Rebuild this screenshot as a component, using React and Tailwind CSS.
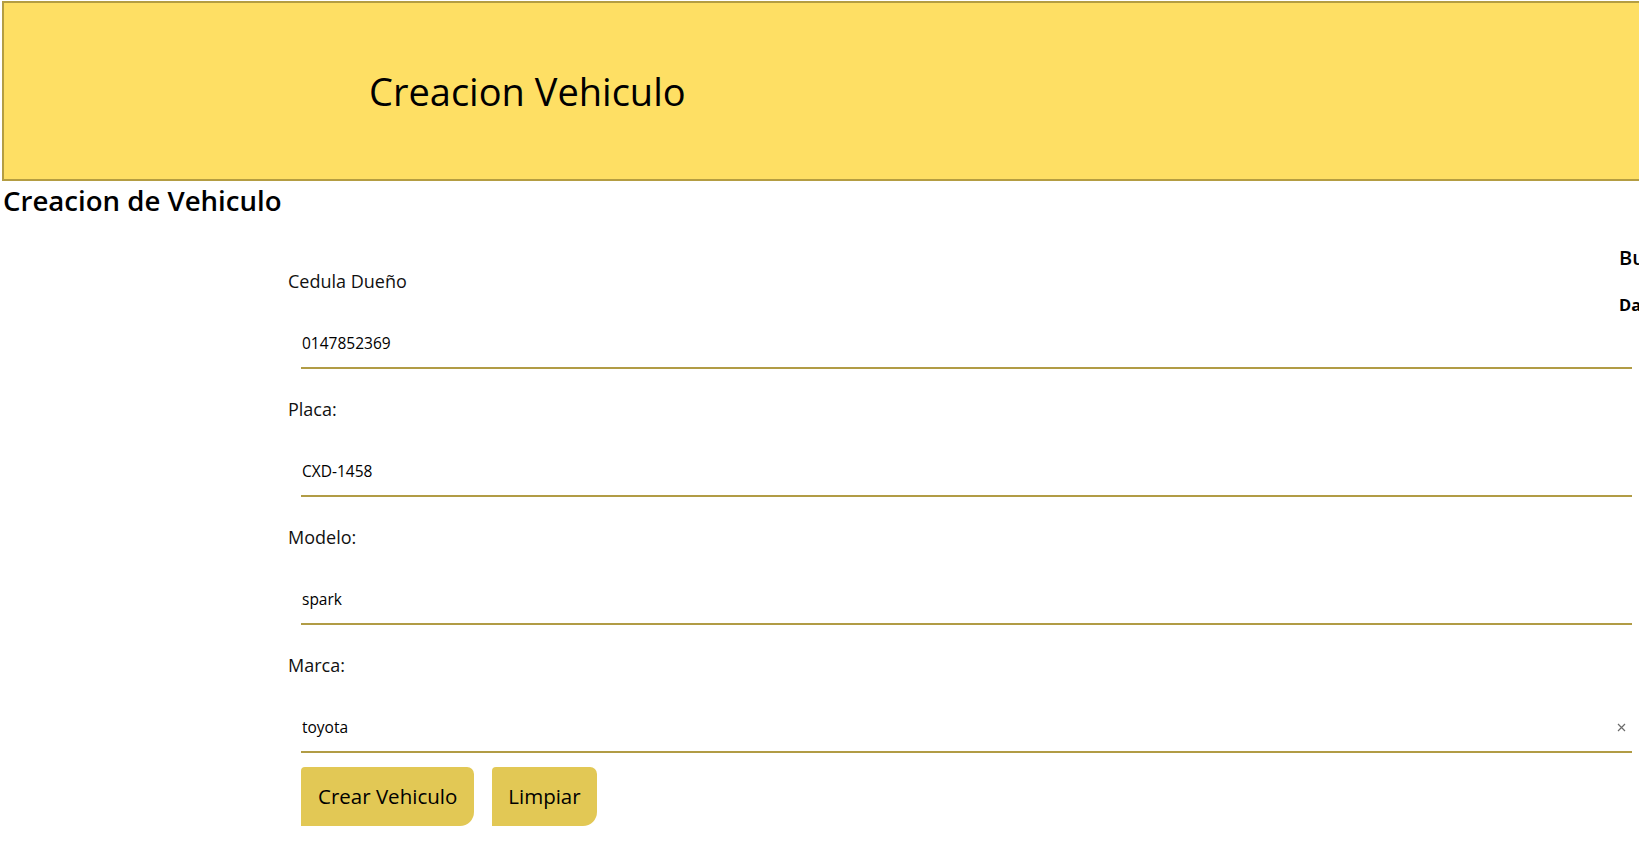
import React from "react";

function Field({ label, value, clear }) {
  return (
    <div className="flex flex-col">
      <label className="text-[18px] leading-[24px] text-[#111]">{label}</label>
      <div className="relative ml-[13px] mt-[27px] w-full">
        <input
          readOnly
          value={value}
          className="block w-full bg-white border-0 border-b-2 border-[#b19c45] pt-[14px] pb-[14px] pl-[1px] pr-0 text-[15.5px] leading-[19px] text-black outline-none"
          style={{ fontFamily: "'Open Sans', sans-serif" }}
        />
        {clear && (
          <svg
            className="absolute right-[6px] top-[19px]"
            width="9"
            height="9"
            viewBox="0 0 9 9"
          >
            <path d="M1 1 L8 8 M8 1 L1 8" stroke="#6b6b6b" strokeWidth="1.2" />
          </svg>
        )}
      </div>
    </div>
  );
}

export default function App() {
  return (
    <div
      className="w-[1639px] h-[867px] overflow-hidden bg-white text-black"
      style={{ fontFamily: "'Open Sans', 'Noto Sans', sans-serif" }}
    >
      <div className="w-[2200px]">
        <header className="ml-[2px] mt-[1px] h-[180px] border-2 border-[#b49d42] bg-[#fedf64] flex items-center pl-[365px]">
          <h1 className="text-[38px] leading-[52px] font-normal">Creacion Vehiculo</h1>
        </header>
        <h2 className="pl-[3px] text-[27.6px] leading-[38px] font-semibold">
          Creacion de Vehiculo
        </h2>
        <div className="flex mt-[50px]">
          <div className="ml-[288px] w-[1331px] flex flex-col gap-[28px]">
            <Field label="Cedula Dueño" value="0147852369" />
            <Field label="Placa:" value="CXD-1458" />
            <Field label="Modelo:" value="spark" />
            <Field label="Marca:" value="toyota" clear />
          </div>
          <div className="flex flex-col pl-0 -mt-[25px]">
            <h3 className="text-[20px] leading-[28px] font-semibold whitespace-nowrap">Buscar Vehiculo</h3>
            <h4 className="mt-[22px] text-[16.5px] leading-[22px] font-bold whitespace-nowrap">Datos</h4>
          </div>
        </div>
        <div className="ml-[301px] mt-[14px] flex gap-[18px]">
          <button className="h-[59px] px-[17px] bg-[#e2c855] text-[20.5px] text-black rounded-tl-[4px] rounded-tr-[7px] rounded-br-[14px] rounded-bl-none">
            Crear Vehiculo
          </button>
          <button className="h-[59px] px-[16px] bg-[#e2c855] text-[20.5px] text-black rounded-tl-[4px] rounded-tr-[7px] rounded-br-[14px] rounded-bl-none">
            Limpiar
          </button>
        </div>
      </div>
    </div>
  );
}
